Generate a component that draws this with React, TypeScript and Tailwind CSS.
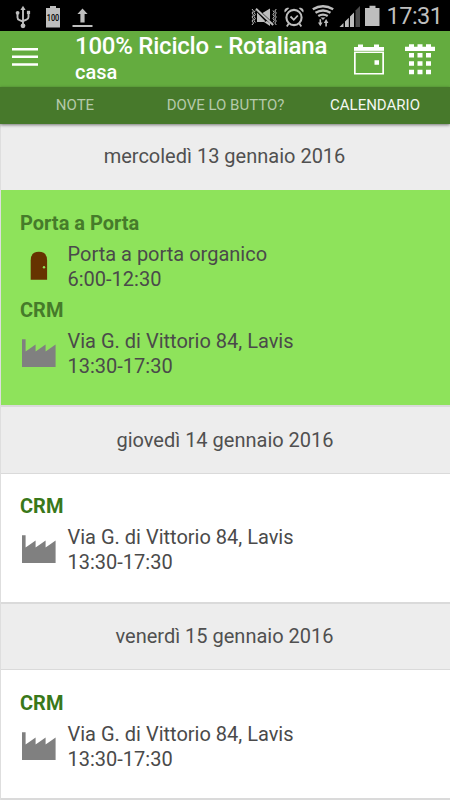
import React from "react";

type Stop = { kind: "door" | "factory"; title: string; place: string; hours: string };

const crm: Stop = {
  kind: "factory",
  title: "CRM",
  place: "Via G. di Vittorio 84, Lavis",
  hours: "13:30-17:30",
};

const door: Stop = {
  kind: "door",
  title: "Porta a Porta",
  place: "Porta a porta organico",
  hours: "6:00-12:30",
};

function StatusBar() {
  return (
    <div className="flex h-[31px] shrink-0 items-center justify-between bg-black text-[#bebebe]">
      <svg width="100" height="31" viewBox="0 0 100 31" fill="none" stroke="currentColor">
        <path d="M23 9v15M17.500 14v3.500q0 2 2 2.700l3.500 1.300M28.500 13v4q0 2-2 2.700L23 21" strokeWidth="1.900" />
        <path d="M20.400 10 23 5.800l2.600 4.200z" fill="currentColor" stroke="none" />
        <circle cx="23" cy="25.800" r="2.400" fill="currentColor" stroke="none" />
        <circle cx="17.600" cy="12.800" r="1.900" fill="currentColor" stroke="none" />
        <path d="M26.900 10.800h3.200V14h-3.200z" fill="currentColor" stroke="none" />
        <path d="M46 8h4V6h6v2h4v19.500H46z" fill="currentColor" stroke="none" />
        <text x="53" y="20.600" fontFamily="Roboto, sans-serif" fontSize="8.500" fontWeight="500" textLength="12.500" lengthAdjust="spacingAndGlyphs" fill="#000" stroke="none" textAnchor="middle">100</text>
        <path d="m77.400 14 5.100-5.500 5.100 5.500h-3v8.500h-4.200V14zM72.500 25h20v2h-20z" fill="currentColor" stroke="none" />
      </svg>
      <div className="flex h-[31px] items-center">
        <svg width="137" height="31" viewBox="248 0 137 31" fill="none" stroke="currentColor">
          <path d="M252 9l1.500 2-1.500 2 1.500 2-1.500 2 1.500 2-1.500 2 1.500 2-1.500 2M255.300 10.500l-1.300 2 1.300 2-1.300 2 1.300 2-1.300 2 1.300 2M276.300 9l-1.500 2 1.500 2-1.500 2 1.500 2-1.500 2 1.500 2-1.500 2 1.500 2M273 10.500l1.300 2-1.300 2 1.300 2-1.300 2 1.300 2-1.300 2" strokeWidth="1" />
          <path d="M257 12.500l9 9.500h-9zM262.500 13l7.500-4.500v11.500zM264 22l6 4v-2.500l-3-2.500z" fill="currentColor" stroke="none" />
          <path d="M256 8.800 273.200 25" strokeWidth="2" />
          <circle cx="294" cy="17.500" r="7.600" strokeWidth="2.100" />
          <path d="m290.500 16.500 3.300 3.300 4-4.300M288.800 23.500l-2 3M299.300 23.500l2 3" strokeWidth="1.800" />
          <path d="M284.800 12.500c-1.500-3 1.500-5.500 4.500-4.500zM303.200 12.500c1.500-3-1.500-5.500-4.500-4.500z" fill="currentColor" stroke="none" />
          <path d="M312.800 9.200q10.200-6 20.400 0M315.500 12.800q7.500-4.700 15 0M318.300 16q4.700-2.800 9.400 0" strokeWidth="2.400" />
          <path d="m323 20-2.500-2.500h5z" fill="currentColor" stroke="none" />
          <path d="M318 22.600h1.500V19.200h1.600v3.400h1.500l-2.300 3.700zM323.800 23l2.300-3.900 2.300 3.900h-1.500v3.400h-1.600V23z" fill="currentColor" stroke="none" />
          <path d="M339.500 27l4-4v4zM345 21.500l3.800-3.800V27H345zM350 16.500l4-4V27h-4z" fill="currentColor" stroke="none" />
          <path d="M355.500 10.500 360 6V27h-4.500z" fill="#4b4b4b" stroke="none" />
          <path d="M365 8h4.500V5.800h6V8h4v18H365z" fill="currentColor" stroke="none" />
        </svg>
        <span className="w-[65px] pt-[2px] pl-[1.500px] text-[23.500px] leading-[31px] tracking-[-0.500px] whitespace-nowrap">17:31</span>
      </div>
    </div>
  );
}

function Header() {
  return (
    <header className="flex h-14 shrink-0 bg-[#64ac3f] text-white">
      <div className="w-[75px] pt-[17px] pl-[12px]">
        <svg width="26" height="18" fill="currentColor">
          <path d="M0 0h26v2.500H0zM0 7.600h26v2.500H0zM0 15.200h26v2.500H0z" />
        </svg>
      </div>
      <div className="w-[252px] overflow-hidden pt-px whitespace-nowrap">
        <div className="text-[24px] leading-[29px] font-medium tracking-[-0.240px]">100% Riciclo - Rotaliana</div>
        <div className="text-[20px] leading-[22px] font-medium">casa</div>
      </div>
      <svg className="ml-[27px]" width="96" height="56" viewBox="354 31 96 56" fill="currentColor">
        <path d="M354 47h4v-2.500h5V47h11v-2.500h5V47h5v27.500h-30zM355.700 53v20h26.600V53z" fillRule="evenodd" />
        <path d="M354 51.300h30" stroke="#64ac3f" strokeWidth=".7" />
        <path d="M374.500 60.300h4.500v4.500h-4.500zM405 46.800h4v-2.500h5v2.500h3.500v-2.500h5v2.500h3.500v-2.500h5v2.500h4v4.200h-30z" />
        <path d="M409 53h5v4.500h-5zM417.500 53h5v4.500h-5zM426 53h5v4.500h-5zM409 61.300h5v4.500h-5zM417.500 61.300h5v4.500h-5zM426 61.300h5v4.500h-5zM409 69.800h5v4.500h-5zM417.500 69.800h5v4.500h-5zM426 69.800h5v4.500h-5z" />
      </svg>
    </header>
  );
}

function Tabs() {
  return (
    <nav className="relative grid h-[37px] shrink-0 grid-cols-3 bg-[#47792b] text-center text-[15px] leading-[37px] text-[#b5c9aa] shadow-[0_1px_3px_rgba(0,0,0,0.5)]">
      <div>NOTE</div>
      <div className="pl-px">DOVE LO BUTTO?</div>
      <div className="text-[#f4f7f2]">CALENDARIO</div>
    </nav>
  );
}

function DoorIcon() {
  return (
    <svg width="48" height="50" viewBox="0 0 48 50">
      <path d="M10.700 37.800V18.500q0-8.700 8.200-8.700t8.200 8.700v19.300z" fill="#663300" />
      <circle cx="24" cy="25.200" r="1.200" fill="#8ee35b" />
    </svg>
  );
}

function FactoryIcon() {
  return (
    <svg width="48" height="50" viewBox="0 0 48 50">
      <path d="M2 38V10.200h3.600v12.300l10-7v7l10-7v7l10-7V38z" fill="#808080" />
    </svg>
  );
}

function StopEntry({ stop }: { stop: Stop }) {
  return (
    <section className="flex flex-col gap-[6px]">
      <h2 className="font-bold">{stop.title}</h2>
      <div className="flex text-[#4a4a4a]">
        {stop.kind === "door" ? <DoorIcon /> : <FactoryIcon />}
        <div className="-ml-[0.500px]">
          <p>{stop.place}</p>
          <p>{stop.hours}</p>
        </div>
      </div>
    </section>
  );
}

export default function App() {
  return (
    <div className="flex h-[800px] w-[450px] flex-col overflow-hidden bg-white font-['Roboto',sans-serif] text-[20px] leading-[25px]">
      <StatusBar />
      <Header />
      <Tabs />
      <main className="flex flex-col border-l border-[#dedede]">
        <div className="h-[66px] bg-[#ededed] pt-[20px] pr-[2px] text-center text-[#505050]">mercoledì 13 gennaio 2016</div>
        <div className="flex h-[215px] flex-col gap-[6px] bg-[#8ee35b] pt-[21px] pl-[19px] text-[#467b2a]">
          <StopEntry stop={door} />
          <StopEntry stop={crm} />
        </div>
        <div className="h-[69px] border-t-2 border-b border-[#dadada] bg-[#ededed] pt-[21px] pr-px text-center text-[#505050]">giovedì 14 gennaio 2016</div>
        <div className="h-[128px] pt-[20px] pl-[19px] text-[#39781a]">
          <StopEntry stop={crm} />
        </div>
        <div className="h-[68px] border-t-2 border-b border-[#dadada] bg-[#ededed] pt-[20px] pr-[2px] text-center text-[#505050]">venerdì 15 gennaio 2016</div>
        <div className="h-[130px] border-b-2 border-[#dadada] pt-[21px] pl-[19px] text-[#39781a]">
          <StopEntry stop={crm} />
        </div>
      </main>
    </div>
  );
}
